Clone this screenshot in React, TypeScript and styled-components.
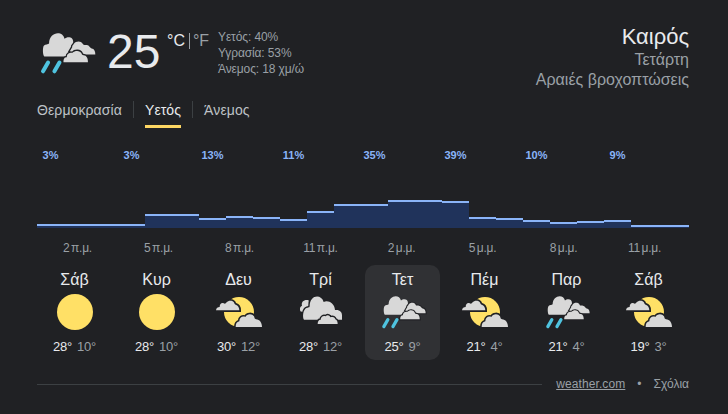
import styled, { createGlobalStyle } from "styled-components";

type IconKind = "sun" | "partly" | "cloudy" | "rain";

interface Day {
  name: string;
  icon: IconKind;
  high: number;
  low: number;
  active?: boolean;
}

const days: Day[] = [
  { name: "Σάβ", icon: "sun", high: 28, low: 10 },
  { name: "Κυρ", icon: "sun", high: 28, low: 10 },
  { name: "Δευ", icon: "partly", high: 30, low: 12 },
  { name: "Τρί", icon: "cloudy", high: 28, low: 12 },
  { name: "Τετ", icon: "rain", high: 25, low: 9, active: true },
  { name: "Πέμ", icon: "partly", high: 21, low: 4 },
  { name: "Παρ", icon: "rain", high: 21, low: 4 },
  { name: "Σάβ", icon: "partly", high: 19, low: 3 },
];

const chances = [3, 3, 13, 11, 35, 39, 10, 9];

const hours = [
  "2 π.μ.",
  "5 π.μ.",
  "8 π.μ.",
  "11 π.μ.",
  "2 μ.μ.",
  "5 μ.μ.",
  "8 μ.μ.",
  "11 μ.μ.",
];

// one bar per hour, in pixels
const bars = [
  4, 4, 4, 4, 14, 14, 10, 12, 11, 9, 17, 24, 24, 28, 28, 27, 11, 10, 8, 6, 7, 8,
  3, 3,
];

const CLOUD = "#d8d8d8";
const SUN = "#ffe066";
const DROP = "#4fc3df";

function WeatherIcon({ kind, size = 48 }: { kind: IconKind; size?: number }) {
  const gap = { fill: CLOUD, stroke: "#202124", strokeWidth: 10, paintOrder: "stroke" };

  if (kind === "sun") {
    return (
      <svg width={size} height={size} viewBox="0 0 48 48" aria-hidden="true">
        <circle cx={24} cy={24} r={18} fill={SUN} />
      </svg>
    );
  }

  if (kind === "partly") {
    return (
      <svg width={size} height={size} viewBox="45 84 144 144" overflow="visible" aria-hidden="true">
        <circle cx={117} cy={156} r={45} fill={SUN} />
        <path
          {...gap}
          d="M48 151C49 144 53 141 59 141C59 132 65 127 71 130C75 132 77 131 80 127C84 121 96 120 101 126C104 130 103 133 107 134C114 136 118 143 118 151Z"
        />
        <path
          {...gap}
          d="M107 201C107 191 110 186 118 184C118 174 127 167 136 171C141 161 156 160 162 169C164 173 163 177 168 178C179 178 186 189 186 201Z"
        />
      </svg>
    );
  }

  if (kind === "cloudy") {
    return (
      <svg width={size} height={size} viewBox="291 84 144 144" overflow="visible" aria-hidden="true">
        <path
          fill={CLOUD}
          d="M301 154C299 146 299 140 306 137C303 126 312 118 326 121L326 138L308 156Z"
        />
        <path
          {...gap}
          strokeWidth={8}
          d="M312 179C307 173 308 147 321 143C324 143 328 144 329 139C329 104 364 101 371 126C384 120 403 128 405 150C419 148 427 157 426 167L426 179Z"
        />
        <path
          {...gap}
          strokeWidth={8}
          d="M353 192C353 184 356 179 362 179C362 171 370 165 377 169C383 161 391 169 391 172C400 169 405 172 406 178C411 180 413 185 413 192Z"
        />
      </svg>
    );
  }

  return (
    <svg width={size} height={size} viewBox="21 10 179 179" overflow="visible" aria-hidden="true">
      <path
        fill={CLOUD}
        d="M43 110C38 107 37 81 42 77C46 73 54 74 57 71C57 36 98 31 103 57C110 50 129 49 129 66L129 90L105 110Z"
      />
      <path
        {...gap}
        strokeWidth={8}
        d="M119 94L126 82C125 76 130 76 131 72C137 64 152 62 158 73C160 77 165 75 170 76C177 77 179 85 184 86C192 87 195 94 195 104H142Z"
      />
      <path
        {...gap}
        strokeWidth={8}
        d="M100 127C100 116 103 112 110 112C110 101 119 98 127 99C134 91 150 91 154 101C155 106 159 106 163 107C171 109 173 119 173 127Z"
      />
      <g stroke={DROP} strokeWidth={12} strokeLinecap="round">
        <path d="M54 128L39 154" />
        <path d="M88 128L73 154" />
      </g>
    </svg>
  );
}

export default function App() {
  return (
    <>
      <GlobalStyle />
      <Widget>
        <Header>
          <HeaderIcon>
            <WeatherIcon kind="rain" size={60} />
          </HeaderIcon>
          <Temperature>25</Temperature>
          <Units>
            <span>°C</span>
            <UnitDivider />
            <Muted>°F</Muted>
          </Units>
          <Details>
            <div>Υετός: 40%</div>
            <div>Υγρασία: 53%</div>
            <div>Άνεμος: 18 χμ/ώ</div>
          </Details>
          <Summary>
            <Title>Καιρός</Title>
            <SummaryLine>Τετάρτη</SummaryLine>
            <SummaryLine>Αραιές βροχοπτώσεις</SummaryLine>
          </Summary>
        </Header>

        <Tabs>
          <Tab>Θερμοκρασία</Tab>
          <TabDivider />
          <Tab $active>Υετός</Tab>
          <TabDivider />
          <Tab>Άνεμος</Tab>
        </Tabs>

        <Chances>
          {chances.map((value, i) => (
            <Chance key={i}>{value}%</Chance>
          ))}
        </Chances>

        <Chart>
          {bars.map((height, i) => (
            <Bar key={i} style={{ height }} />
          ))}
        </Chart>

        <Hours>
          {hours.map((hour) => (
            <Hour key={hour}>{hour}</Hour>
          ))}
        </Hours>

        <Days>
          {days.map((day, i) => (
            <DayCard key={i} $active={day.active}>
              <DayName>{day.name}</DayName>
              <WeatherIcon kind={day.icon} />
              <Range>
                <span>{day.high}°</span>
                <Muted>{day.low}°</Muted>
              </Range>
            </DayCard>
          ))}
        </Days>

        <Footer>
          <Rule />
          <Source href="#">weather.com</Source>
          <Dot>•</Dot>
          <span>Σχόλια</span>
        </Footer>
      </Widget>
    </>
  );
}

const GlobalStyle = createGlobalStyle`
  body {
    margin: 0;
    background: #202124;
  }
`;

const Widget = styled.div`
  box-sizing: border-box;
  width: 728px;
  height: 414px;
  padding: 23px 39px 0 37px;
  overflow: hidden;
  background: #202124;
  color: #e8eaed;
  font-family: "Liberation Sans", Arial, sans-serif;
`;

const Muted = styled.span`
  color: #9aa0a6;
`;

const Header = styled.header`
  display: flex;
  align-items: flex-start;
  height: 77px;
`;

const HeaderIcon = styled.div`
  width: 60px;
  height: 60px;
  margin-right: 10px;

  svg {
    display: block;
  }
`;

const Temperature = styled.div`
  width: 54px;
  font-size: 48px;
  line-height: 57px;
`;

const Units = styled.div`
  display: flex;
  margin: 9px 0 0 6px;
  width: 45px;
  font-size: 16px;
  line-height: 18px;
`;

const UnitDivider = styled.span`
  width: 1px;
  height: 16px;
  margin: 1px 3px 0 4px;
  background: #9aa0a6;
`;

const Details = styled.div`
  margin: 6px 0 0 6px;
  color: #9aa0a6;
  font-size: 12px;
  line-height: 16px;
  letter-spacing: -0.12px;
`;

const Summary = styled.div`
  margin-left: auto;
  text-align: right;
`;

const Title = styled.div`
  font-size: 22px;
  line-height: 27px;
`;

const SummaryLine = styled.div`
  color: #9aa0a6;
  font-size: 16px;
  line-height: 20px;
`;

const Tabs = styled.nav`
  display: flex;
  height: 49px;
`;

const Tab = styled.div<{ $active?: boolean }>`
  height: 25px;
  color: ${({ $active }) => ($active ? "#e8eaed" : "#bdc1c6")};
  border-bottom: 3px solid ${({ $active }) => ($active ? "#fdd663" : "transparent")};
  font-size: 14px;
  line-height: 21px;
  letter-spacing: 0.1px;
`;

const TabDivider = styled.div`
  width: 1px;
  height: 17px;
  margin: 1px 11px 0;
  background: #3c4043;
`;

const Chances = styled.div`
  display: flex;
  height: 51px;
  margin-left: -27px;
`;

const Chance = styled.div`
  width: 81px;
  color: #8ab4f8;
  font-size: 11px;
  font-weight: bold;
  line-height: 13px;
  text-align: center;
`;

const Chart = styled.div`
  display: flex;
  align-items: flex-end;
  height: 28px;
`;

const Bar = styled.div`
  box-sizing: border-box;
  flex: none;
  width: 27px;
  border-top: 2px solid #8ab4f8;
  background: #20335b;

  &:last-child {
    width: 31px;
  }
`;

const Hours = styled.div`
  display: flex;
  height: 37px;
  color: #9aa0a6;
`;

const Hour = styled.div`
  width: 81px;
  padding-top: 13px;
  font-size: 12px;
  line-height: 14px;
  letter-spacing: -0.25px;
  word-spacing: -1.5px;
  text-align: center;
`;

const Days = styled.div`
  display: flex;
  gap: 7px;
`;

const DayCard = styled.div<{ $active?: boolean }>`
  box-sizing: border-box;
  width: 75px;
  height: 95px;
  padding-top: 6px;
  border-radius: 10px;
  background: ${({ $active }) => ($active ? "#303134" : "transparent")};
  text-align: center;

  svg {
    display: block;
    margin: 0 0 0 14px;
  }
`;

const DayName = styled.div`
  height: 17px;
  font-size: 16px;
  line-height: 18px;
`;

const Range = styled.div`
  display: flex;
  justify-content: center;
  gap: 5px;
  margin-top: 3px;
  font-size: 13px;
  line-height: 15px;
  letter-spacing: -0.2px;
`;

const Footer = styled.footer`
  display: flex;
  align-items: center;
  height: 14px;
  margin-top: 17px;
  color: #9aa0a6;
  font-size: 12px;
  line-height: 14px;
`;

const Rule = styled.div`
  flex: 1;
  height: 1px;
  margin-right: 14px;
  background: #3c4043;
`;

const Source = styled.a`
  color: inherit;
  text-decoration: underline;
  letter-spacing: 0.1px;
`;

const Dot = styled.span`
  margin: 0 12px;
`;
